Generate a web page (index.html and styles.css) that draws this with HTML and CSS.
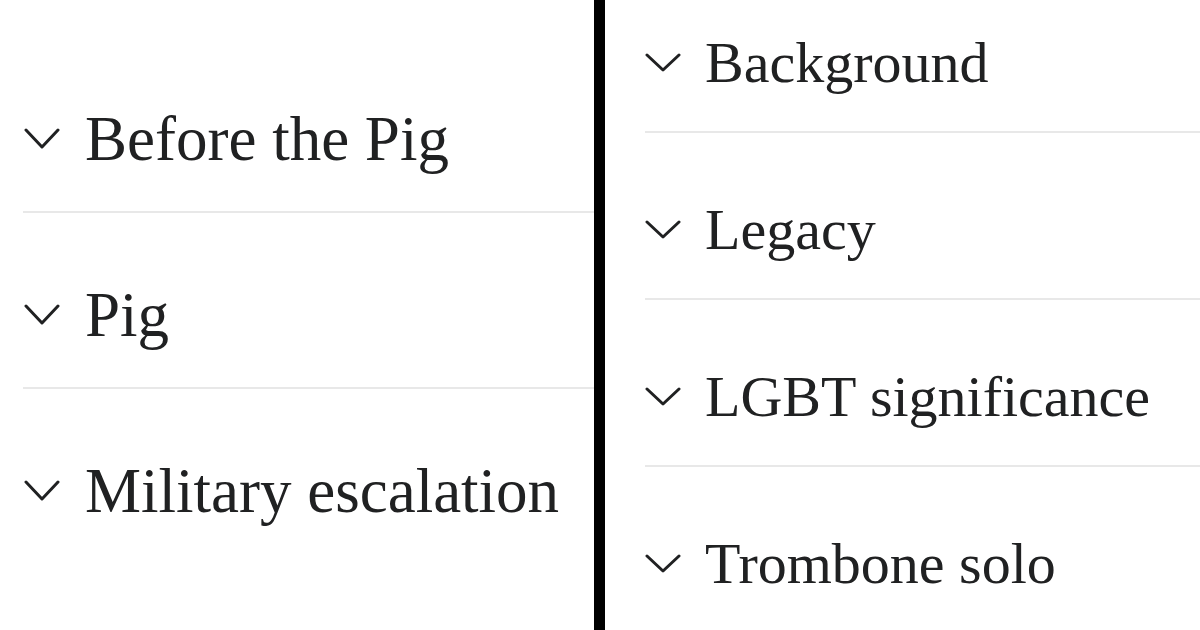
FILE: index.html
```html
<!DOCTYPE html>
<html lang="en">
<head>
<meta charset="utf-8">
<title>Sections</title>
<link rel="stylesheet" href="styles.css">
</head>
<body>
<div class="page">
  <section class="panel panel-left">
    <ul class="sections">
      <li class="section"><svg class="chev" viewBox="0 0 36 22"><polyline points="2,2 18,19 34,2"/></svg><span class="title">Before the Pig</span></li>
      <li class="section"><svg class="chev" viewBox="0 0 36 22"><polyline points="2,2 18,19 34,2"/></svg><span class="title">Pig</span></li>
      <li class="section"><svg class="chev" viewBox="0 0 36 22"><polyline points="2,2 18,19 34,2"/></svg><span class="title">Military escalation</span></li>
    </ul>
  </section>
  <div class="divider"></div>
  <section class="panel panel-right">
    <ul class="sections">
      <li class="section"><svg class="chev" viewBox="0 0 36 20"><polyline points="2,2 18,17 34,2"/></svg><span class="title">Background</span></li>
      <li class="section"><svg class="chev" viewBox="0 0 36 20"><polyline points="2,2 18,17 34,2"/></svg><span class="title">Legacy</span></li>
      <li class="section"><svg class="chev" viewBox="0 0 36 20"><polyline points="2,2 18,17 34,2"/></svg><span class="title">LGBT significance</span></li>
      <li class="section"><svg class="chev" viewBox="0 0 36 20"><polyline points="2,2 18,17 34,2"/></svg><span class="title">Trombone solo</span></li>
    </ul>
  </section>
</div>
</body>
</html>
```
FILE: styles.css
```css
html, body {
  margin: 0;
  padding: 0;
  background: #ffffff;
}
body {
  width: 1200px;
  height: 630px;
  overflow: hidden;
  font-family: "Liberation Serif", "Times New Roman", serif;
  color: #202122;
}
.page {
  display: flex;
  height: 630px;
}
.panel {
  overflow: hidden;
}
.panel-left {
  width: 571px;
  padding-left: 23px;
}
.divider {
  width: 11px;
  background: #000000;
  flex: none;
}
.panel-right {
  flex: 1;
  padding-left: 40px;
}
.sections {
  list-style: none;
  margin: 0;
  padding: 0;
}
.section {
  display: flex;
  align-items: center;
  border-bottom: 2px solid #e8e8e8;
}
.section:last-child {
  border-bottom: none;
}
.chev {
  flex: none;
  fill: none;
  stroke: #202122;
  stroke-width: 3;
  stroke-linecap: round;
  stroke-linejoin: round;
}
.title {
  white-space: nowrap;
}

/* left column */
.panel-left .sections {
  margin-top: 37px;
}
.panel-left .section {
  padding: 67px 0 37px;
}
.panel-left .chev {
  width: 36px;
  height: 22px;
  margin-left: 1px;
  margin-right: 25px;
}
.panel-left .title {
  font-size: 63px;
  line-height: 70px;
}

/* right column */
.panel-right .sections {
  margin-top: -34px;
}
.panel-right .section {
  padding: 65px 0 36px;
}
.panel-right .chev {
  width: 36px;
  height: 20px;
  margin-right: 24px;
}
.panel-right .title {
  font-size: 58px;
  line-height: 64px;
}
```
